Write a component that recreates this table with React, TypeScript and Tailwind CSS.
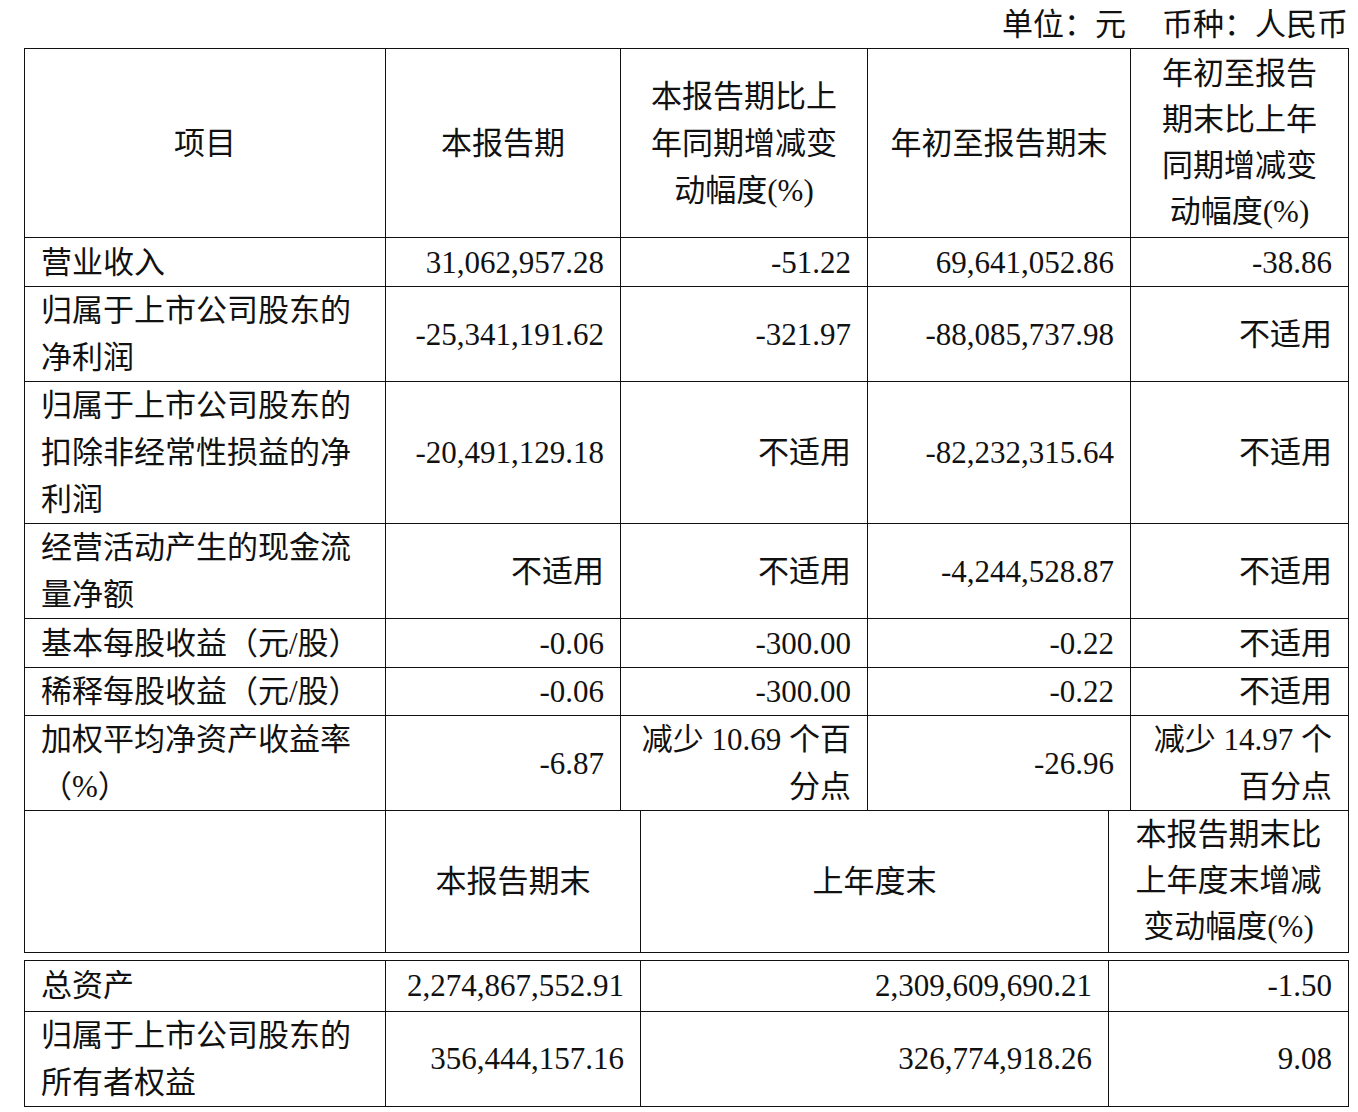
import React from "react";

type Align = "left" | "right" | "center";

interface Cell {
  text: React.ReactNode;
  align?: Align;
}

const FONT = { fontFamily: '"Liberation Serif", "Noto Sans CJK SC", serif' };

const colsA = [361, 235, 247, 263, 218];
const colsB = [361, 255, 468, 240];

const br = (...lines: string[]) =>
  lines.map((l, i) => (
    <React.Fragment key={i}>
      {i > 0 && <br />}
      {l}
    </React.Fragment>
  ));

const rowsA: { h: number; cells: Cell[] }[] = [
  {
    h: 49,
    cells: [
      { text: "营业收入", align: "left" },
      { text: "31,062,957.28" },
      { text: "-51.22" },
      { text: "69,641,052.86" },
      { text: "-38.86" },
    ],
  },
  {
    h: 94,
    cells: [
      { text: br("归属于上市公司股东的", "净利润"), align: "left" },
      { text: "-25,341,191.62" },
      { text: "-321.97" },
      { text: "-88,085,737.98" },
      { text: "不适用" },
    ],
  },
  {
    h: 141,
    cells: [
      { text: br("归属于上市公司股东的", "扣除非经常性损益的净", "利润"), align: "left" },
      { text: "-20,491,129.18" },
      { text: "不适用" },
      { text: "-82,232,315.64" },
      { text: "不适用" },
    ],
  },
  {
    h: 94,
    cells: [
      { text: br("经营活动产生的现金流", "量净额"), align: "left" },
      { text: "不适用" },
      { text: "不适用" },
      { text: "-4,244,528.87" },
      { text: "不适用" },
    ],
  },
  {
    h: 49,
    cells: [
      { text: "基本每股收益（元/股）", align: "left" },
      { text: "-0.06" },
      { text: "-300.00" },
      { text: "-0.22" },
      { text: "不适用" },
    ],
  },
  {
    h: 48,
    cells: [
      { text: "稀释每股收益（元/股）", align: "left" },
      { text: "-0.06" },
      { text: "-300.00" },
      { text: "-0.22" },
      { text: "不适用" },
    ],
  },
  {
    h: 94,
    cells: [
      { text: br("加权平均净资产收益率", "（%）"), align: "left" },
      { text: "-6.87" },
      { text: br("减少 10.69 个百", "分点") },
      { text: "-26.96" },
      { text: br("减少 14.97 个", "百分点") },
    ],
  },
];

const alignCls: Record<Align, string> = {
  left: "text-left",
  right: "text-right",
  center: "text-center",
};

function Td({ cell }: { cell: Cell }) {
  const a = cell.align ?? "right";
  return (
    <td className={`border border-[#111] px-[16px] py-0 align-middle leading-[47px] ${alignCls[a]}`}>
      {cell.text}
    </td>
  );
}

function Cols({ widths }: { widths: number[] }) {
  return (
    <colgroup>
      {widths.map((w, i) => (
        <col key={i} style={{ width: w }} />
      ))}
    </colgroup>
  );
}

export default function App() {
  return (
    <div className="w-[1358px] h-[1112px] bg-white text-[#111] text-[31px]" style={FONT}>
      <div className="flex h-[48px] items-center justify-end pr-[10px] leading-none">
        <span>单位：元</span>
        <span className="ml-[36px]">币种：人民币</span>
      </div>
      <div className="ml-[24px]">
        <table className="table-fixed border-collapse w-[1324px]">
          <Cols widths={colsA} />
          <tbody>
            <tr className="h-[189px]">
              <td className="border border-[#111] text-center align-middle leading-[47px]">项目</td>
              <td className="border border-[#111] text-center align-middle leading-[47px]">本报告期</td>
              <td className="border border-[#111] text-center align-middle leading-[47px]">
                {br("本报告期比上", "年同期增减变", "动幅度(%)")}
              </td>
              <td className="border border-[#111] text-center align-middle leading-[47px]">年初至报告期末</td>
              <td className="border border-[#111] text-center align-middle leading-[46px]">
                {br("年初至报告", "期末比上年", "同期增减变", "动幅度(%)")}
              </td>
            </tr>
            {rowsA.map((r, i) => (
              <tr key={i} style={{ height: r.h }}>
                {r.cells.map((c, j) => (
                  <Td key={j} cell={c} />
                ))}
              </tr>
            ))}
          </tbody>
        </table>
        <table className="table-fixed border-collapse w-[1324px]">
          <Cols widths={colsB} />
          <tbody>
            <tr className="h-[141px]">
              <td className="border border-t-0 border-[#111]"></td>
              <td className="border border-t-0 border-[#111] text-center align-middle leading-[47px]">本报告期末</td>
              <td className="border border-t-0 border-[#111] text-center align-middle leading-[47px]">上年度末</td>
              <td className="border border-t-0 border-[#111] text-center align-middle leading-[46px]">
                {br("本报告期末比", "上年度末增减", "变动幅度(%)")}
              </td>
            </tr>
          </tbody>
        </table>
        <table className="table-fixed border-collapse w-[1324px] mt-[7px]">
          <Cols widths={colsB} />
          <tbody>
            <tr className="h-[51px]">
              <Td cell={{ text: "总资产", align: "left" }} />
              <Td cell={{ text: "2,274,867,552.91" }} />
              <Td cell={{ text: "2,309,609,690.21" }} />
              <Td cell={{ text: "-1.50" }} />
            </tr>
            <tr className="h-[95px]">
              <Td cell={{ text: br("归属于上市公司股东的", "所有者权益"), align: "left" }} />
              <Td cell={{ text: "356,444,157.16" }} />
              <Td cell={{ text: "326,774,918.26" }} />
              <Td cell={{ text: "9.08" }} />
            </tr>
          </tbody>
        </table>
      </div>
    </div>
  );
}
